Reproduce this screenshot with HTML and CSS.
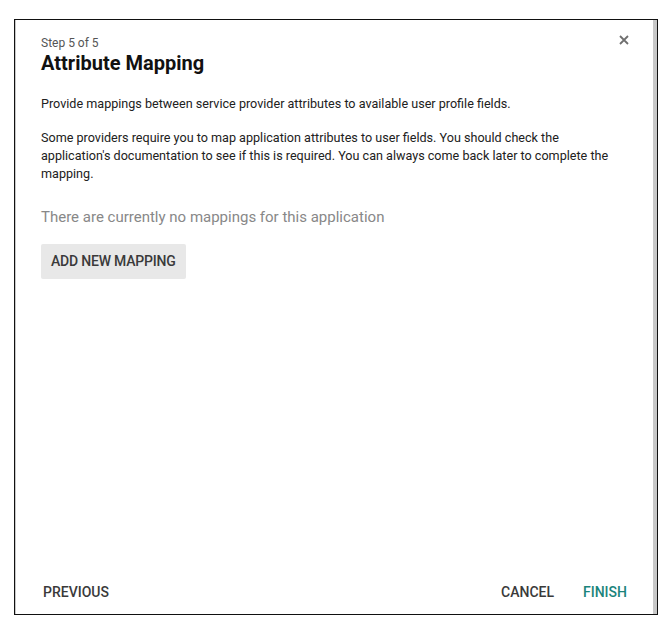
FILE: index.html
```
<!DOCTYPE html>
<html>

	<head>
		<meta charset="UTF-8">
		<title>Attribute Mapping</title>
		<link rel="stylesheet" href="styles.css">
	</head>

	<body>
		<div class="dialog">
			<div class="head">
				<div class="titles">
					<div class="step">Step 5 of 5</div>
					<h2 class="title">Attribute Mapping</h2>
				</div>
				<a href="javascript:;" class="close">
					<svg width="10" height="10" viewBox="0 0 10 10">
						<path d="M1 1L9 9M9 1L1 9" stroke="#6f6f6f" stroke-width="1.8" />
					</svg>
				</a>
			</div>
			<div class="body">
				<p class="lead">Provide mappings between service provider attributes to available user profile fields.</p>
				<p class="info">Some providers require you to map application attributes to user fields. You should check the application's documentation to see if this is required. You can always come back later to complete the mapping.</p>
				<p class="empty">There are currently no mappings for this application</p>
				<a href="javascript:;" class="btn-add">ADD NEW MAPPING</a>
			</div>
			<div class="foot">
				<a href="javascript:;" class="btn">PREVIOUS</a>
				<div class="actions">
					<a href="javascript:;" class="btn">CANCEL</a>
					<a href="javascript:;" class="btn finish">FINISH</a>
				</div>
			</div>
		</div>
	</body>

</html>
```

FILE: styles.css
```
* {
	margin: 0;
	padding: 0;
}

body {
	font-family: Roboto, "Liberation Sans", sans-serif;
	color: #212121;
	background: #fff;
}

a {
	cursor: pointer;
	text-decoration: none;
}

.dialog {
	width: 642px;
	height: 594px;
	margin: 19px 0 0 14px;
	border: 1px solid #111;
	box-shadow: inset 1px 0 #c8c8c8, inset -4px 0 #c8c8c8;
	display: flex;
	flex-direction: column;
}

.head {
	display: flex;
	justify-content: space-between;
	padding: 15px 26px 0 26px;
}

.step {
	font-size: 12px;
	line-height: 16px;
	color: #555;
}

.title {
	font-size: 20px;
	line-height: 24px;
	font-weight: 700;
	color: #111;
}

.close {
	display: flex;
	margin: 0 2px 0 0;
	height: 10px;
}

.body {
	padding: 0 26px;
	font-size: 12.6px;
	line-height: 18px;
}

.lead {
	margin-top: 20px;
}

.info {
	margin-top: 16px;
}

.empty {
	margin-top: 24px;
	font-size: 15px;
	line-height: 20px;
	color: #888;
}

.btn-add {
	display: inline-block;
	margin-top: 17px;
	padding: 0 10px;
	height: 35px;
	line-height: 35px;
	background: #e8e8e8;
	border-radius: 2px;
	font-size: 14px;
	font-weight: 500;
	letter-spacing: -0.2px;
	color: #3a3a3a;
}

.foot {
	margin-top: auto;
	display: flex;
	justify-content: space-between;
	align-items: center;
	padding: 0 30px 12px 28px;
}

.actions {
	display: flex;
	gap: 29px;
}

.btn {
	font-size: 14px;
	line-height: 20px;
	font-weight: 500;
	color: #3a3a3a;
}

.finish {
	color: #1b847b;
}
```
